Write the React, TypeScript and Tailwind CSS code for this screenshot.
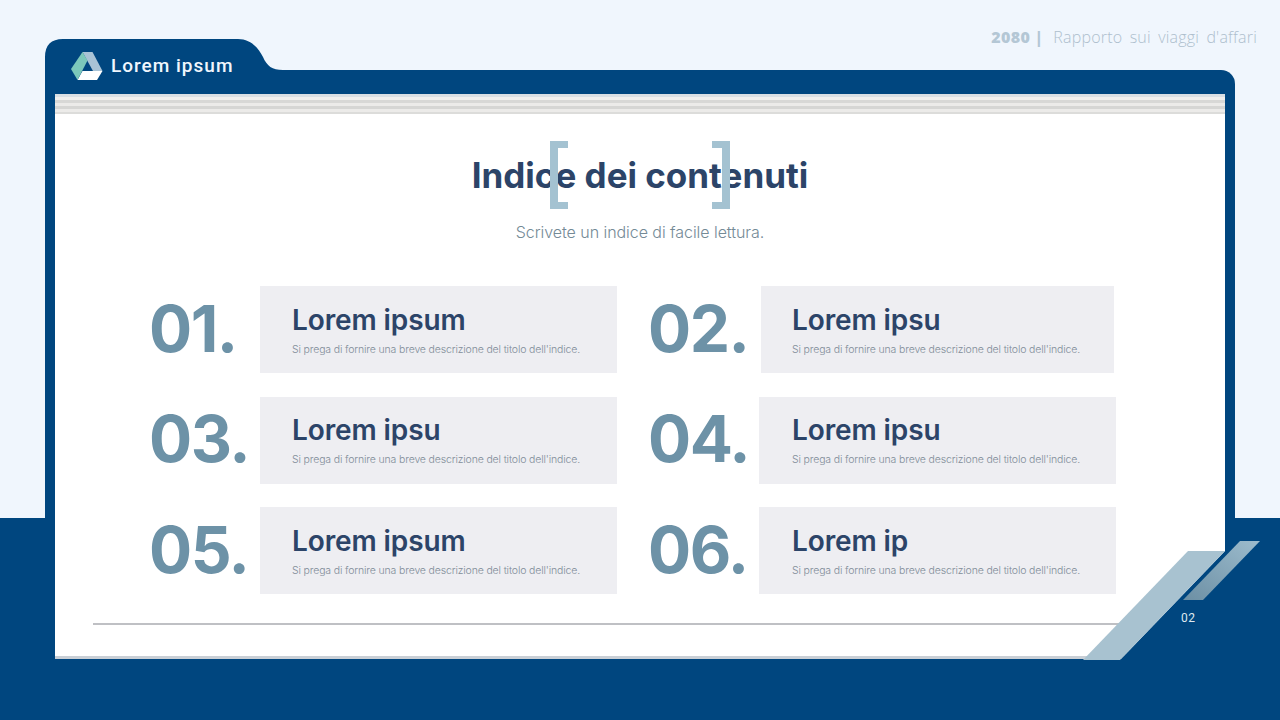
const items = [
  { num: "01.", title: "Lorem ipsum", box: "ml-0 w-[357px] pl-[32px]" },
  { num: "02.", title: "Lorem ipsu", box: "ml-[2px] w-[353px] pl-[31px]" },
  { num: "03.", title: "Lorem ipsu", box: "ml-0 w-[357px] pl-[32px]" },
  { num: "04.", title: "Lorem ipsu", box: "ml-0 w-[357px] pl-[33px]" },
  { num: "05.", title: "Lorem ipsum", box: "ml-0 w-[357px] pl-[32px]" },
  { num: "06.", title: "Lorem ip", box: "ml-0 w-[357px] pl-[33px]" },
];

const Logo = () => (
  <svg viewBox="0 0 32 30" className="h-[30px] w-[32px] shrink-0">
    <polygon points="11.5,1 21.5,1 31.5,20 22,20" fill="#a9c3d6" />
    <polygon points="6.5,29 26,29 31.5,20 11.5,20" fill="#ffffff" />
    <polygon points="0,18 11.5,1 16.5,9.5 6.5,29" fill="#7cc8bb" />
  </svg>
);

const Row = ({ num, title, box }: { num: string; title: string; box: string }) => (
  <div className="flex h-[87px] items-center">
    <div className="w-[111px] shrink-0 pb-[2px] text-[64px] leading-none font-bold tracking-[-1.5px] text-[#6d92a7]">{num}</div>
    <div className={`flex h-full shrink-0 flex-col justify-center bg-[#eeeef2] pt-[1px] ${box}`}>
      <div className="text-[28px] leading-[34px] font-semibold tracking-[-0.1px] text-[#2c4468]">{title}</div>
      <div className="mt-[5px] text-[10.5px] leading-[16px] font-light tracking-[-0.15px] text-[#808c98]">
        Si prega di fornire una breve descrizione del titolo dell'indice.
      </div>
    </div>
  </div>
);

export default function App() {
  return (
    <div className="relative h-[720px] w-[1280px] overflow-hidden bg-[#f0f6fd] font-['Inter',sans-serif]">
      <div className="absolute right-0 bottom-0 left-0 h-[202px] bg-[#00467f]" />

      <div className="absolute top-[26px] right-[23px] flex items-center font-['Open_Sans',sans-serif] text-[16px] leading-[22px] text-[#aebfcd]">
        <span className="font-extrabold tracking-[0.4px] text-[#b4c7d5]">2080 |</span>
        <span className="ml-[10px] font-light tracking-[0.2px] [word-spacing:3px]">
          Rapporto sui viaggi d'affari
        </span>
      </div>

      <div className="relative ml-[45px] w-[1190px] pt-[39px]">
        <div className="relative h-[31px]">
          <svg viewBox="0 0 240 31" className="absolute top-0 left-0 h-[31px] w-[240px]">
            <path d="M0 31 V18 Q0 0 18 0 H193 C205 0 213 8 218 18 C222 27 227 31 238 31 Z" fill="#00467f" />
          </svg>
          <div className="absolute top-[12px] left-[26px] flex items-center gap-[8px]">
            <Logo />
            <span className="font-['Roboto',sans-serif] text-[19px] leading-[28px] font-medium tracking-[1px] text-[#f0f6fd]">
              Lorem ipsum
            </span>
          </div>
        </div>
        <div className="h-[590px] rounded-tr-[14px] bg-[#00467f] px-[10px] pt-[24px]">
          <div className="flex h-[565px] flex-col bg-white">
            <div className="flex h-[20px] shrink-0 flex-col">
              <div className="h-[3px] bg-[#d9dfe4]" />
              <div className="h-[3px] bg-[#f0efed]" />
              <div className="h-[3px] bg-[#d8d8d6]" />
              <div className="h-[3px] bg-[#ecebe9]" />
              <div className="h-[3px] bg-[#d6d6d4]" />
              <div className="h-[3px] bg-[#ecebe9]" />
              <div className="h-[2px] bg-[#dcdcda]" />
            </div>
            <div className="relative flex flex-col items-center pt-[40px]">
              <h1 className="text-[35px] leading-[42px] font-bold text-[#2c4468]">Indice dei contenuti</h1>
              <div className="absolute top-[27px] left-[495px] h-[68px] w-[18px] border-y-[7px] border-l-[8px] border-[#a4c2d1]" />
              <div className="absolute top-[27px] left-[657px] h-[68px] w-[18px] border-y-[7px] border-r-[8px] border-[#a4c2d1]" />
              <p className="mt-[24px] text-[16px] leading-[24px] font-light tracking-[-0.05px] text-[#748a96]">
                Scrivete un indice di facile lettura.
              </p>
            </div>
            <div className="mt-[42px] grid grid-cols-[468px_468px] gap-x-[31px] gap-y-[23.5px] pl-[94px]">
              {items.map((item) => (
                <Row key={item.num} {...item} />
              ))}
            </div>
            <div className="mt-[29px] ml-[38px] h-[2px] w-[1030px] bg-[#bfc0c4]" />
            <div className="mt-auto h-[3px] shrink-0 bg-[#c9cfd6]" />
          </div>
        </div>
      </div>

      <svg viewBox="0 0 1280 720" className="pointer-events-none absolute inset-0 h-[720px] w-[1280px]">
        <polygon points="1225,551 1225,660 1120,660" fill="#00467f" />
        <polygon points="1188,551 1225,551 1120,660 1083,660" fill="#a8c2d0" />
        <defs>
          <linearGradient id="stripe" x1="1" y1="0" x2="0" y2="1">
            <stop offset="0" stopColor="#9dbccd" />
            <stop offset="1" stopColor="#6c8fa4" />
          </linearGradient>
        </defs>
        <polygon points="1240,541 1260,541 1203,600 1183,600" fill="url(#stripe)" />
      </svg>
      <span className="absolute top-[610px] left-[1181px] font-['Roboto',sans-serif] text-[12px] leading-[16px] tracking-[0.5px] text-[#dfe9f0]">
        02
      </span>
    </div>
  );
}
